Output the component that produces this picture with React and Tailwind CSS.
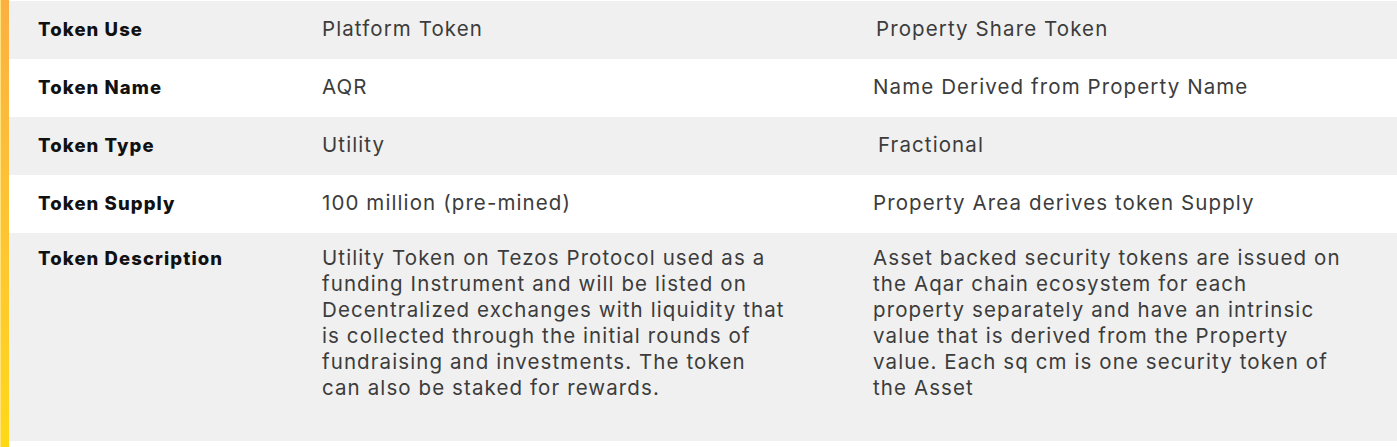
const rows = [
  {
    label: "Token Use",
    a: ["Platform Token"],
    b: ["Property Share Token"],
    bShift: "ml-[3px]",
  },
  {
    label: "Token Name",
    a: ["AQR"],
    b: ["Name Derived from Property Name"],
  },
  {
    label: "Token Type",
    a: ["Utility"],
    b: ["Fractional"],
    bShift: "ml-[5px]",
  },
  {
    label: "Token Supply",
    a: ["100 million (pre-mined)"],
    b: ["Property Area derives token Supply"],
  },
  {
    label: "Token Description",
    a: [
      "Utility Token on Tezos Protocol used as a",
      "funding Instrument and will be listed on",
      "Decentralized exchanges with liquidity that",
      "is collected through the initial rounds of",
      "fundraising and investments. The token",
      "can also be staked for rewards.",
    ],
    b: [
      "Asset backed security tokens are issued on",
      "the Aqar chain ecosystem for each",
      "property separately and have an intrinsic",
      "value that is derived from the Property",
      "value. Each sq cm is one security token of",
      "the Asset",
    ],
    tall: true,
  },
];

function Lines({ lines }) {
  return lines.map((l, i) => (
    <span key={i} className="block whitespace-nowrap">
      {l}
    </span>
  ));
}

export default function App() {
  return (
    <div
      className="w-[1397px] h-[447px] bg-white flex"
      style={{ fontFamily: "Inter, 'Open Sans', sans-serif" }}
    >
      <div className="w-[9px] h-[447px] bg-gradient-to-b from-[#fbb042] to-[#ffd814] border-l border-[#ffe27a]" />
      <div className="flex-1 flex flex-col pt-px">
        {rows.map((r, i) => (
          <div
            key={r.label}
            className={`grid grid-cols-[283px_551px_1fr] ${
              i % 2 === 0 ? "bg-[#f0f0f0]" : "bg-white"
            } ${r.tall ? "h-[208px] items-start pt-[12px]" : "h-[58px] items-center"}`}
          >
            <div className="pl-[29px] text-[18.5px] font-extrabold text-[#111] tracking-[1.1px]">
              {r.label}
            </div>
            <div className="pl-[30px] pb-[2px] text-[20.5px] leading-[26px] text-[#3c3c3c] tracking-[1.1px]">
              <Lines lines={r.a} />
            </div>
            <div className="pl-[30px] pb-[2px] text-[20.5px] leading-[26px] text-[#3c3c3c] tracking-[1.1px]">
              <div className={r.bShift || ""}>
                <Lines lines={r.b} />
              </div>
            </div>
          </div>
        ))}
      </div>
    </div>
  );
}
